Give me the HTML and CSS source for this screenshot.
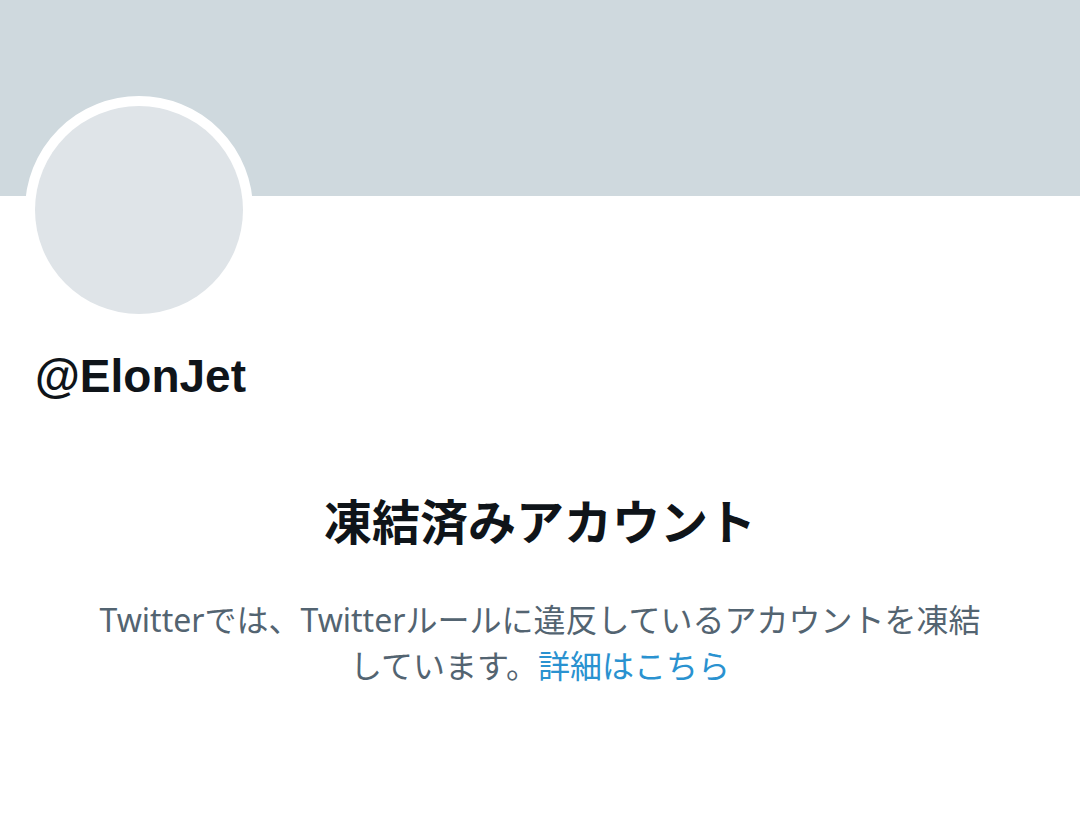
FILE: index.html
```html
<!DOCTYPE html>
<html lang="ja">
<head>
<meta charset="utf-8">
<link rel="stylesheet" href="styles.css">
</head>
<body>
<div class="page">
  <div class="banner"></div>
  <div class="avatar"><div class="avatar-inner"></div></div>
  <div class="handle">@ElonJet</div>
  <div class="notice">
    <h1 class="title">凍結済みアカウント</h1>
    <p class="desc">Twitterでは、Twitterルールに違反しているアカウントを凍結<br>しています。<a class="link" href="#">詳細はこちら</a></p>
  </div>
</div>
</body>
</html>
```
FILE: styles.css
```css
html, body {
  margin: 0;
  padding: 0;
  background: #ffffff;
}
.page {
  width: 1080px;
  height: 821px;
  display: flex;
  flex-direction: column;
  font-family: "Noto Sans", "Noto Sans CJK JP", sans-serif;
  overflow: hidden;
}
.banner {
  height: 196px;
  flex-shrink: 0;
  background: #cfd9de;
}
.avatar {
  width: 208px;
  height: 208px;
  flex-shrink: 0;
  margin-top: -100px;
  margin-left: 25px;
  border: 10px solid #ffffff;
  border-radius: 50%;
  background: #ffffff;
}
.avatar-inner {
  width: 100%;
  height: 100%;
  border-radius: 50%;
  background: #dfe4e8;
}
.handle {
  margin: 24px 0 0 35px;
  font-family: "Liberation Sans", "Noto Sans", sans-serif;
  font-size: 46px;
  font-weight: 700;
  color: #0f1419;
  line-height: 56px;
}
.notice {
  display: flex;
  flex-direction: column;
  align-items: center;
  text-align: center;
  margin-top: 83px;
}
.title {
  margin: 0;
  font-family: "Noto Sans CJK JP", sans-serif;
  font-size: 48px;
  font-weight: 700;
  color: #0f1419;
  line-height: 64px;
}
.desc {
  margin: 46px 0 0;
  font-size: 32px;
  line-height: 46px;
  color: #536471;
}
.link {
  color: #2a92d0;
  text-decoration: none;
}
```
